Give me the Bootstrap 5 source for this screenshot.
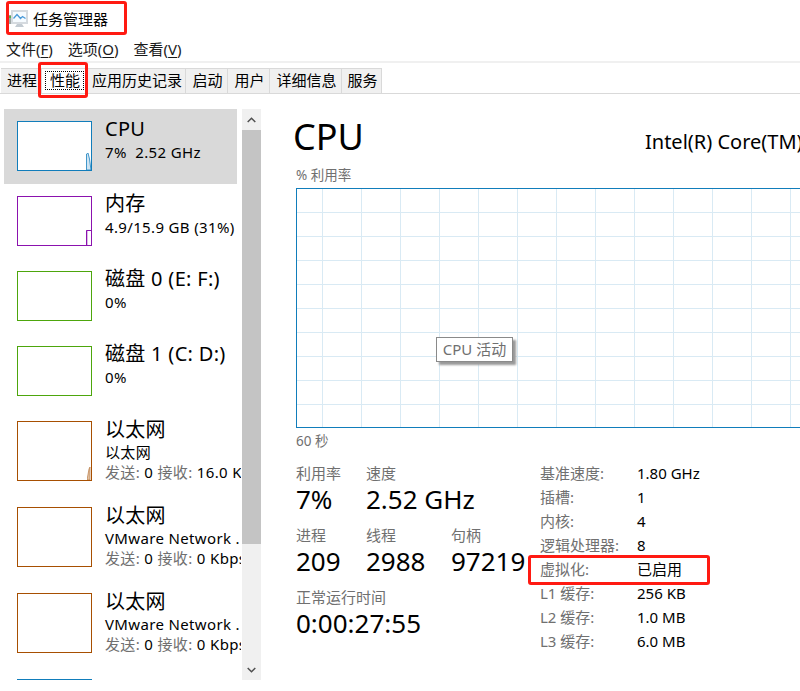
<!DOCTYPE html>
<html lang="zh-CN">
<head>
<meta charset="UTF-8" />
<meta name="viewport" content="width=device-width, initial-scale=1.0"/>
<title>任务管理器</title>
<link href="https://cdn.jsdelivr.net/npm/bootstrap@5.3.0/dist/css/bootstrap.min.css" rel="stylesheet"/>
<style>
html, body { height: 100%; }
body {
  background: #fff;
  color: #000;
  font-family: "Noto Sans", "Noto Sans CJK SC", sans-serif;
  font-size: 15px;
  line-height: 1.2;
  overflow: hidden;
}
.page { position: relative; width: 800px; height: 691px; overflow: hidden; }

.title-row { height: 37px; padding: 10px 0 0 8px; gap: 5px; }
.title-row span { line-height: 18px; }
.menu-row { height: 24px; padding-left: 6px; gap: 15px; line-height: 24px; border-bottom: 2px solid #f0f0f0; box-sizing: content-box; color: #1a1a1a; }
.menu-row u { text-underline-offset: 2px; }

.tm-tabs { height: 26px; margin-top: 5px; padding-left: 1px; border-bottom: 1px solid #d9d9d9; }
.tm-tabs .tab { height: 25px; line-height: 23px; padding-left: 2px; text-align: center; background: #f0f0f0; border: 1px solid #d9d9d9; border-bottom: 0; border-left: 0; }
.tm-tabs .tab.active { background: #fff; outline: 1px dotted #000; outline-offset: -4px; }

.content { margin-top: 15px; }
.side { width: 237px; margin-left: 4px; height: 571px; overflow: hidden; flex: none; }
.side-item { height: 86px; padding: 12px 0 0 13px; gap: 13px; flex: none; }
.side-item.small { height: 75px; }
.side-item.active { background: #d9d9d9; width: 233px; }
.thumb { width: 75px; height: 60px; background: #fff; border: 1px solid; flex: none; position: relative; }
.small .thumb { height: 50px; }
.thumb svg { position: absolute; right: 0; bottom: 0; }
.thumb.cpu { border-color: #117dbb; }
.thumb.mem { border-color: #8b12ae; }
.thumb.disk { border-color: #4da60c; }
.thumb.net { border-color: #a74f01; }
.side-text { min-width: 0; white-space: nowrap; margin-top: -4px; }
.side-name { font-size: 20px; line-height: 24px; letter-spacing: .3px; }
.side-sub { font-size: 15px; line-height: 20px; letter-spacing: .35px; }
.side-name + .side-sub { margin-top: 1px; }
.side-item:not(.small) .side-name { margin-top: 1px; }
.side-item:not(.small) .side-name + .side-sub { margin-top: 0; }
.muted { color: #707070; }

.scroll { width: 19px; height: 571px; margin-left: 1px; background: #f0f0f0; flex: none; }
.scroll .arrow { height: 21px; }
.scroll .bar { height: 414px; background: #c4c4c4; }
.scroll .rest { height: 115px; }

.main { margin-left: 32px; flex: none; width: 600px; }
.main-head { height: 58px; }
.main-head h1 { font-size: 36px; font-weight: 400; margin: 8px 0 0; line-height: 40px; width: 352px; flex: none; }
.main-head .model { font-size: 20px; line-height: 26px; margin-top: 20px; white-space: nowrap; }
.axis { font-size: 13.5px; line-height: 16px; margin-left: 3px; }
.chart {
  position: relative;
  height: 240px;
  width: 600px;
  margin: 5px 0 5px 3px;
  border: 1px solid #117dbb;
  background-color: #fff;
  background-image:
    linear-gradient(to right, #d9eaf4 1px, transparent 1px),
    linear-gradient(to bottom, #d9eaf4 1px, transparent 1px);
  background-size: 39px 24px;
  background-position: 25px 23px;
}
.chart-tip {
  position: absolute;
  left: 139px;
  top: 148px;
  width: 77px;
  height: 25px;
  line-height: 23px;
  text-align: center;
  color: #707070;
  background: #fff;
  border: 1px solid #8a8a8a;
  box-shadow: 3px 3px 2px #999;
}
.stats { margin-left: 3px; margin-top: 15px; }
.stats-left { width: 244px; flex: none; }
.stat-row { height: 62px; }
.stat-row > div { flex: none; }
.w70 { width: 70px; }
.w85 { width: 85px; }
.stat-label { line-height: 18px; height: 18px; }
.stat-value { font-size: 26px; line-height: 34px; }
.spec { display: grid; grid-template-columns: 97px auto; grid-auto-rows: 24px; line-height: 24px; margin-top: -3px; }
.spec dt { font-weight: 400; color: #707070; }
.spec dd { margin: 0; }

.callout { position: absolute; border: 3px solid #ff1a12; border-radius: 3px; pointer-events: none; }
.callout-title { left: 6px; top: 1px; width: 121px; height: 34px; }
.callout-tab { left: 38px; top: 62px; width: 50px; height: 36px; }
.callout-virt { left: 528px; top: 555px; width: 182px; height: 30px; }
</style>
</head>
<body>
<div class="page">
  <div class="title-row d-flex align-items-start">
    <svg width="20" height="17" viewBox="0 0 20 17">
      <rect x="0" y="5" width="3" height="9" fill="#9aa3a0"/>
      <rect x="0" y="6" width="3" height="2" fill="#58b04a"/>
      <rect x="3" y="0" width="17" height="14" fill="#d5dadf"/>
      <rect x="5" y="2" width="13" height="10" fill="#f6fbff"/>
      <path d="M5.5 8.5l3.5-4 3.5 4 2-2 3 2" fill="none" stroke="#4a9ad8" stroke-width="1.3"/>
      <path d="M9 14h5l2 3H7z" fill="#c3cbd2"/>
    </svg>
    <span>任务管理器</span>
  </div>

  <div class="menu-row d-flex">
    <span>文件(<u>F</u>)</span>
    <span>选项(<u>O</u>)</span>
    <span>查看(<u>V</u>)</span>
  </div>

  <div class="tm-tabs d-flex">
    <div class="tab" style="width:41px">进程</div>
    <div class="tab active" style="width:45px">性能</div>
    <div class="tab" style="width:99px">应用历史记录</div>
    <div class="tab" style="width:42px">启动</div>
    <div class="tab" style="width:42px">用户</div>
    <div class="tab" style="width:72px">详细信息</div>
    <div class="tab" style="width:40px">服务</div>
  </div>

  <div class="content d-flex">
    <div class="side d-flex flex-column">
      <div class="side-item small active d-flex">
        <div class="thumb cpu">
          <svg width="5" height="17" viewBox="0 0 5 17"><path d="M.5 17V1L2 0 3.5 6 5 17z" fill="#cfe4f2" stroke="#2f8cc4" stroke-width=".9"/></svg>
        </div>
        <div class="side-text">
          <div class="side-name">CPU</div>
          <div class="side-sub">7%&nbsp; 2.52 GHz</div>
        </div>
      </div>
      <div class="side-item small d-flex">
        <div class="thumb mem">
          <svg width="5" height="15" viewBox="0 0 5 15"><path d="M0 15V0H2V15z" fill="#dcb8e6"/><path d="M.5 15V.5H5" fill="none" stroke="#8b12ae"/></svg>
        </div>
        <div class="side-text">
          <div class="side-name">内存</div>
          <div class="side-sub">4.9/15.9 GB (31%)</div>
        </div>
      </div>
      <div class="side-item small d-flex">
        <div class="thumb disk"></div>
        <div class="side-text">
          <div class="side-name">磁盘 0 (E: F:)</div>
          <div class="side-sub">0%</div>
        </div>
      </div>
      <div class="side-item small d-flex">
        <div class="thumb disk"></div>
        <div class="side-text">
          <div class="side-name">磁盘 1 (C: D:)</div>
          <div class="side-sub">0%</div>
        </div>
      </div>
      <div class="side-item d-flex">
        <div class="thumb net">
          <svg width="4" height="13" viewBox="0 0 4 13"><path d="M0 13L2 2 3 0V13z" fill="#e2c3a6" stroke="#b9793f" stroke-width=".7"/></svg>
        </div>
        <div class="side-text">
          <div class="side-name">以太网</div>
          <div class="side-sub">以太网</div>
          <div class="side-sub"><span class="muted">发送:</span> 0 <span class="muted">接收:</span> 16.0 Kbps</div>
        </div>
      </div>
      <div class="side-item d-flex">
        <div class="thumb net"></div>
        <div class="side-text">
          <div class="side-name">以太网</div>
          <div class="side-sub">VMware Network .</div>
          <div class="side-sub"><span class="muted">发送:</span> 0 <span class="muted">接收:</span> 0 Kbps</div>
        </div>
      </div>
      <div class="side-item d-flex">
        <div class="thumb net"></div>
        <div class="side-text">
          <div class="side-name">以太网</div>
          <div class="side-sub">VMware Network .</div>
          <div class="side-sub"><span class="muted">发送:</span> 0 <span class="muted">接收:</span> 0 Kbps</div>
        </div>
      </div>
      <div class="side-item d-flex">
        <div class="thumb cpu"></div>
      </div>
    </div>

    <div class="scroll">
      <div class="arrow d-flex align-items-center justify-content-center">
        <svg width="9" height="6" viewBox="0 0 9 6"><path d="M.7 5L4.5 1.2 8.3 5" fill="none" stroke="#505050" stroke-width="1.5"/></svg>
      </div>
      <div class="bar"></div>
      <div class="rest"></div>
      <div class="arrow d-flex align-items-center justify-content-center">
        <svg width="9" height="6" viewBox="0 0 9 6"><path d="M.7 1L4.5 4.8 8.3 1" fill="none" stroke="#505050" stroke-width="1.5"/></svg>
      </div>
    </div>

    <div class="main">
      <div class="main-head d-flex">
        <h1>CPU</h1>
        <div class="model">Intel(R) Core(TM) i5-8250U CPU @ 1.60GHz</div>
      </div>
      <div class="axis muted">% 利用率</div>
      <div class="chart">
        <div class="chart-tip">CPU 活动</div>
      </div>
      <div class="axis muted">60 秒</div>

      <div class="stats d-flex">
        <div class="stats-left">
          <div class="stat-row d-flex">
            <div class="w70"><div class="stat-label muted">利用率</div><div class="stat-value">7%</div></div>
            <div><div class="stat-label muted">速度</div><div class="stat-value">2.52 GHz</div></div>
          </div>
          <div class="stat-row d-flex">
            <div class="w70"><div class="stat-label muted">进程</div><div class="stat-value">209</div></div>
            <div class="w85"><div class="stat-label muted">线程</div><div class="stat-value">2988</div></div>
            <div><div class="stat-label muted">句柄</div><div class="stat-value">97219</div></div>
          </div>
          <div class="stat-row d-flex">
            <div><div class="stat-label muted">正常运行时间</div><div class="stat-value">0:00:27:55</div></div>
          </div>
        </div>
        <dl class="spec mb-0">
          <dt>基准速度:</dt><dd>1.80 GHz</dd>
          <dt>插槽:</dt><dd>1</dd>
          <dt>内核:</dt><dd>4</dd>
          <dt>逻辑处理器:</dt><dd>8</dd>
          <dt>虚拟化:</dt><dd>已启用</dd>
          <dt>L1 缓存:</dt><dd>256 KB</dd>
          <dt>L2 缓存:</dt><dd>1.0 MB</dd>
          <dt>L3 缓存:</dt><dd>6.0 MB</dd>
        </dl>
      </div>
    </div>
  </div>

  <div class="callout callout-title"></div>
  <div class="callout callout-tab"></div>
  <div class="callout callout-virt"></div>
</div>
<script src="https://cdn.jsdelivr.net/npm/bootstrap@5.3.0/dist/js/bootstrap.bundle.min.js"></script>
</body>
</html>
